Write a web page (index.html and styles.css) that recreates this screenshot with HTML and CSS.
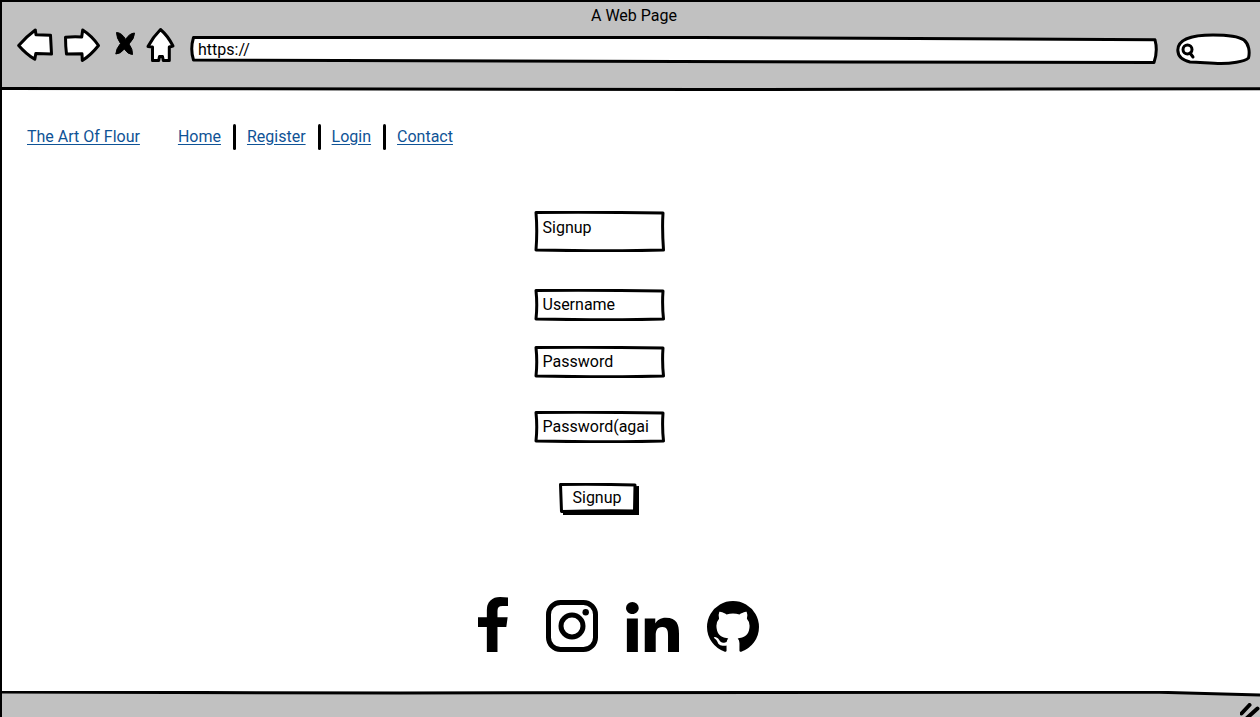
FILE: index.html
```html
<!DOCTYPE html>
<html lang="en">
<head>
<meta charset="utf-8">
<meta name="viewport" content="width=device-width, initial-scale=1">
<title>A Web Page</title>
<link rel="stylesheet" href="styles.css">
</head>
<body>
<div class="browser">
  <header class="chrome">
    <svg class="sketch" viewBox="0 0 1258 90" preserveAspectRatio="none" aria-hidden="true"><path class="fill" d="M0 0L1258 0L1258 89L0 88Z"/><path class="outline edge top" d="M0 1L1258 1"/><path class="outline edge" d="M0 88.500Q300 89.500 700 89.500L1258 88.800"/></svg>
    <div class="title">A Web Page</div>
    <div class="toolbar">
      <button class="tool back" aria-label="Back"><svg width="36" height="36" viewBox="17 26 36 36"><path d="M18.700 44.500Q27 35 35.300 29L36 33.800L50.500 34.200L51.500 53L35.800 52.500L34.800 58.300Q26 53 18.700 44.500Z"/></svg></button>
      <button class="tool forward" aria-label="Forward"><svg width="38" height="36" viewBox="63 26 38 36"><path d="M65.500 36.300Q73 35.500 81.700 36L82.700 29Q92 35 98.500 44.500Q91 54 82.300 59.500L82 52.800L66.500 53Q65.500 45 65.500 36.300Z"/></svg></button>
      <button class="tool stop" aria-label="Stop"><svg width="23" height="36" viewBox="114 26 23 36"><path class="solid" d="M116.500 31.500Q121.500 31.500 125.800 38.500Q129 32.500 134.500 32Q134.500 37.500 129 43Q133 48.500 132.500 53.500Q128 53.500 124.300 48Q120.500 53 115.800 53Q116 48 120.500 42.500Q116.500 37 116.500 31.500Z"/></svg></button>
      <button class="tool home" aria-label="Home"><svg width="30" height="36" viewBox="146 26 30 36"><path d="M160.500 28.500Q168 35 173 45L169.300 46L169.300 59.500L163.300 59.500L162.500 55.500L159.500 55.500L158.700 59.500L152.500 59.500L152.500 46L148 45.500Q153 36 160.500 28.500Z"/></svg></button>
      <label class="address">
        <svg class="sketch" viewBox="190 36 968 28" preserveAspectRatio="none" aria-hidden="true"><path class="outline" d="M193.500 37.500L700 37.500L1155 39.800Q1158 51 1154 62.500L850 62L193.500 60Q190 49 193.500 37.500Z"/></svg>
        <input class="entry" type="text" value="https://" aria-label="Address">
      </label>
      <label class="search">
        <svg class="sketch" viewBox="1176 33 75 32" aria-hidden="true"><path class="outline" d="M1177.800 50C1178 40 1189 35 1213 35C1226 35 1238 36 1244 40C1249 44 1250 52 1248.500 58C1244 62 1230 63.500 1221 63.500C1210 63.500 1200 62 1190 62C1182 60 1177.800 56 1177.800 50Z"/><circle class="glass" cx="1187.500" cy="49.500" r="4.500"/><path class="glass" d="M1190 53L1193 57"/></svg>
        <input class="entry" type="search" aria-label="Search">
      </label>
    </div>
  </header>

  <main class="page">
    <nav class="nav">
      <a class="brand" href="#">The Art Of Flour</a>
      <ul class="menu">
        <li><a href="#">Home</a></li>
        <li><a href="#">Register</a></li>
        <li><a href="#">Login</a></li>
        <li><a href="#">Contact</a></li>
      </ul>
    </nav>

    <form class="signup">
      <h1 class="box heading"><svg class="sketch" viewBox="0 0 131 41" preserveAspectRatio="none" aria-hidden="true"><path class="outline" d="M2 1.500Q65 1 129 2Q128 18 129.500 39Q80 40.500 2 39Q3.500 20 2 1.500Z"/></svg><span>Signup</span></h1>
      <label class="box username"><svg class="sketch" viewBox="0 0 131 32" preserveAspectRatio="none" aria-hidden="true"><path class="outline" d="M2 1.500Q65 1 129 2Q128 16 129.500 30Q80 31.500 2 30Q3.500 16 2 1.500Z"/></svg><input class="entry" type="text" placeholder="Username" aria-label="Username"></label>
      <label class="box password"><svg class="sketch" viewBox="0 0 131 32" preserveAspectRatio="none" aria-hidden="true"><path class="outline" d="M2 1.500Q65 1 129 2Q128 16 129.500 30Q80 31.500 2 30Q3.500 16 2 1.500Z"/></svg><input class="entry" type="password" placeholder="Password" aria-label="Password"></label>
      <label class="box again"><svg class="sketch" viewBox="0 0 131 32" preserveAspectRatio="none" aria-hidden="true"><path class="outline" d="M2 1.500Q65 1 129 2Q128 16 129.500 30Q80 31.500 2 30Q3.500 16 2 1.500Z"/></svg><input class="entry" type="password" placeholder="Password(agai" aria-label="Password again"></label>
      <button class="submit" type="button"><svg class="sketch" viewBox="0 0 80 32" preserveAspectRatio="none" aria-hidden="true"><path d="M4 6L80 3L80 32L4 32Z"/><path class="outline" d="M1.500 1.500Q40 1 76 2L75.500 28Q40 27.500 2.500 28.500Z"/></svg><span>Signup</span></button>
    </form>

    <div class="social">
      <a href="#" aria-label="Facebook"><svg width="30" height="55" viewBox="95 0 864 1664" preserveAspectRatio="none"><path d="M959 12v264h-157q-86 0-116 36t-30 108v189h293l-39 296h-254v759h-306v-759h-255v-296h255v-218q0-186 104-288.500t277-102.500q147 0 228 12z"/></svg></a>
      <a class="instagram" href="#" aria-label="Instagram"><svg width="52" height="52" viewBox="0 0 52 52"><rect class="ring" x="2.500" y="2.500" width="47" height="47" rx="12"/><circle class="ring" cx="26" cy="26" r="11"/><circle cx="39.700" cy="12.300" r="3.200"/></svg></a>
      <a class="linkedin" href="#" aria-label="LinkedIn"><svg width="53" height="50" viewBox="0 0 448 448" preserveAspectRatio="none"><path d="M100.280 448H7.400V148.900h92.880zM53.790 108.100C24.090 108.100 0 83.500 0 53.800a53.790 53.790 0 0 1 107.580 0c0 29.700-24.100 54.300-53.790 54.300zM447.900 448h-92.680V302.400c0-34.700-.7-79.200-48.290-79.200-48.290 0-55.690 37.700-55.690 76.700V448h-92.780V148.900h89.080v40.800h1.300c12.400-23.500 42.690-48.300 87.880-48.300 94 0 111.280 61.900 111.280 142.300V448z"/></svg></a>
      <a class="github" href="#" aria-label="GitHub"><svg width="52" height="51" viewBox="128 128 1536 1507"><path d="M896 128q209 0 385.500 103t279.500 279.500 103 385.500q0 251-146.500 451.500t-378.500 277.500q-27 5-40-7t-13-30q0-3 .5-76.500t.5-134.500q0-97-52-142 57-6 102.500-18t94-39 81-66.500 53-105 20.500-150.500q0-119-79-206 37-91-8-204-28-9-81 11t-92 44l-38 24q-93-26-192-26t-192 26q-16-11-42.500-27t-83.500-38.500-85-13.500q-45 113-8 204-79 87-79 206 0 85 20.500 150t52.500 105 80.500 67 94 39 102.500 18q-39 36-49 103-21 10-45 15t-57 5-65.500-21.500-55.500-62.500q-19-32-48.500-52t-49.500-24l-20-3q-21 0-29 4.500t-5 11.500 9 14 13 12l7 5q22 10 43.500 38t31.500 51l10 23q13 38 44 61.500t67 30 69.500 7 55.500-3.500l23-4q0 38 .5 88.500t.5 54.500q0 18-13 30t-40 7q-232-77-378.500-277.500t-146.500-451.500q0-209 103-385.500t279.500-279.500 385.500-103z"/></svg></a>
    </div>
  </main>

  <footer class="status">
    <svg class="sketch" viewBox="2 691 1258 26" preserveAspectRatio="none" aria-hidden="true"><path class="fill" d="M2 692L1150 692L1260 695L1260 717L2 717Z"/><path class="outline edge" d="M2 692Q100 693 400 693Q900 691 1150 692L1260 695"/></svg>
    <svg class="grip" width="20" height="14" viewBox="1240 703 20 14" aria-hidden="true"><path d="M1241.500 713.500L1249.500 705M1247 718L1257.500 708.500"/></svg>
  </footer>
</div>
</body>
</html>
```
FILE: styles.css
```css
* {
  box-sizing: border-box;
}

body {
  margin: 0;
  background: #fff;
  color: #000;
  font: 16px/20px Roboto, "Liberation Sans", sans-serif;
}

input,
button {
  font: inherit;
  color: inherit;
}

a {
  color: #0f5396;
  text-underline-offset: 2px;
}

.browser {
  display: flex;
  flex-direction: column;
  min-height: 100vh;
  border-left: 2px solid #000;
}

/* Hand-drawn outlines sit behind the content of their box */
.sketch {
  position: absolute;
  inset: 0;
  width: 100%;
  height: 100%;
  z-index: -1;
}

.outline {
  fill: #fff;
  stroke: #000;
  stroke-width: 3;
  stroke-linejoin: round;
  vector-effect: non-scaling-stroke;
}

.chrome,
.address,
.search,
.box,
.submit,
.status {
  position: relative;
  isolation: isolate;
}

.chrome {
  padding: 6px 9px 27px 15px;
}

.chrome > .sketch {
  overflow: visible;
}

.title {
  text-align: center;
}

.toolbar {
  display: flex;
  align-items: center;
  height: 37px;
}

.tool {
  padding: 0;
  border: 0;
  background: none;
}

.tool svg {
  display: block;
  fill: #fff;
  stroke: #000;
  stroke-width: 3;
  stroke-linejoin: round;
}

.tool .solid {
  fill: #000;
  stroke-width: 1;
}

.forward {
  margin-left: 10px;
}

.stop {
  margin-left: 13px;
}

.home {
  margin-left: 9px;
}

.address {
  display: flex;
  flex: 1;
  height: 28px;
  margin: 10px 18px 0 14px;
  padding: 0 8px;
}

.search {
  display: flex;
  width: 75px;
  height: 32px;
  margin-top: 8px;
  padding: 0 8px 0 20px;
}

.glass {
  fill: none;
  stroke: #000;
  stroke-width: 3;
  stroke-linecap: round;
}

.entry {
  width: 100%;
  min-width: 0;
  padding: 0;
  border: 0;
  outline: 0;
  background: none;
}

.entry::placeholder {
  color: #000;
  opacity: 1;
}

.page {
  flex: 1;
  padding: 34px 25px 38px;
}

.nav {
  display: flex;
  align-items: center;
  gap: 38px;
}

.menu {
  display: flex;
  margin: 0;
  padding: 0;
  list-style: none;
}

.menu li {
  display: flex;
  align-items: center;
  height: 26px;
}

.menu li + li::before {
  content: "";
  width: 3px;
  height: 26px;
  margin: 0 11px 0 12px;
  border-radius: 2px;
  background: #000;
}

.signup {
  display: flex;
  flex-direction: column;
  align-items: center;
  margin-top: 61px;
  padding-right: 64px;
}

.box {
  display: flex;
  width: 131px;
  height: 32px;
  padding: 0 9px;
}

.heading {
  height: 41px;
  margin: 0;
  padding-top: 7px;
  font-size: 16px;
  font-weight: 400;
}

.username {
  margin-top: 37px;
}

.password {
  margin-top: 25px;
}

.again {
  margin-top: 33px;
}

.submit {
  width: 80px;
  height: 32px;
  margin-top: 40px;
  padding: 0 4px 3px 0;
  border: 0;
  background: none;
}

.social {
  display: flex;
  justify-content: center;
  align-items: flex-end;
  margin-top: 82px;
  padding-right: 26px;
}

.social svg {
  display: block;
  fill: #000;
}

.social .ring {
  fill: none;
  stroke: #000;
  stroke-width: 5;
}

.instagram {
  margin-left: 38px;
}

.linkedin {
  margin-left: 28px;
}

.github {
  margin-left: 28px;
}

.status {
  display: flex;
  justify-content: flex-end;
  align-items: flex-end;
  height: 26px;
}

.fill {
  fill: #c1c1c1;
}

.edge {
  fill: none;
}

.top {
  stroke-width: 2;
}

.grip {
  fill: none;
  stroke: #000;
  stroke-width: 4;
  stroke-linecap: round;
}
```
